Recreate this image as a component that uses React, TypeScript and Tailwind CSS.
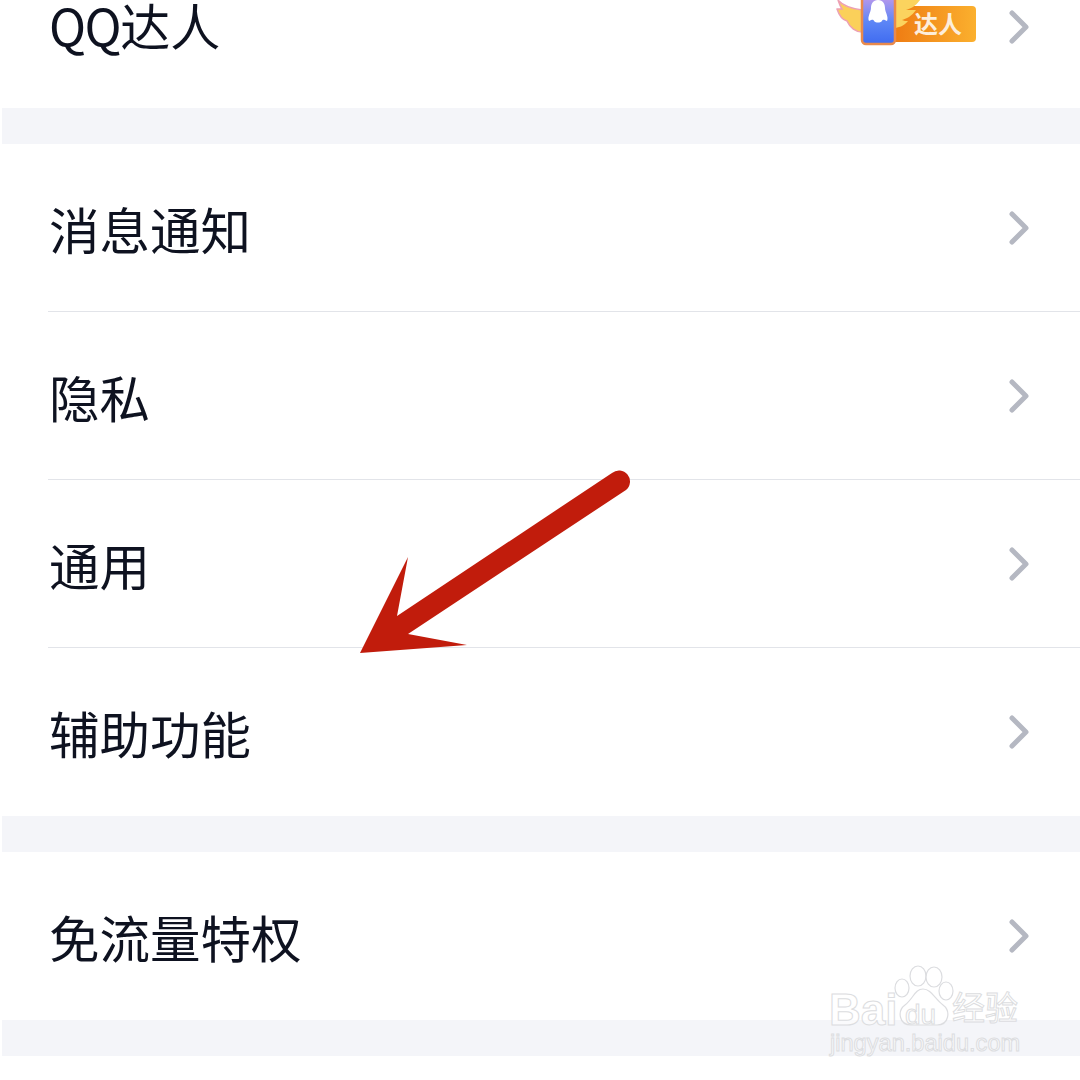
const rows = ['消息通知', '隐私', '通用', '辅助功能'];

function Chevron() {
  return (
    <svg width="24" height="36" viewBox="0 0 24 36" className="shrink-0">
      <path d="M5 4 L19 18 L5 32" fill="none" stroke="#b5b8c2" strokeWidth="5" strokeLinecap="round" strokeLinejoin="round" />
    </svg>
  );
}

function Row({ label, divider }: { label: string; divider?: boolean }) {
  return (
    <div className="h-[168px] pl-12 flex flex-col">
      <div className="flex-1 flex items-center justify-between pr-[49px]">
        <span className="text-[50.5px] leading-none pl-[1px] pt-[1px] text-[#0e1220]">{label}</span>
        <Chevron />
      </div>
      {divider && <div className="h-[1px] bg-[#e2e4e9]" />}
    </div>
  );
}

function Badge() {
  return (
    <svg width="140" height="54" viewBox="0 0 140 54" className="shrink-0">
      <defs>
        <linearGradient id="label" x1="0" x2="1" y1="0" y2="0">
          <stop offset="0" stopColor="#ee7a12" />
          <stop offset="1" stopColor="#fbb02e" />
        </linearGradient>
        <linearGradient id="phone" x1="0" x2="0" y1="0" y2="1">
          <stop offset="0" stopColor="#c79bea" />
          <stop offset="0.55" stopColor="#5d86f6" />
          <stop offset="1" stopColor="#3f6bf0" />
        </linearGradient>
      </defs>
      <rect x="55" y="6" width="85" height="36" rx="4" fill="url(#label)" />
      <path d="M2 0 C6 5 12 8 26 10 L26 32 C20 32 14 28 11 21 C7 20 3 15 1 9 C3 9 5 9 6 9 C4 6 3 3 2 0 Z" fill="#fbd05a" stroke="#eda0b4" strokeWidth="1.5" />
      <path d="M84 0 C80 6 74 9 70 10 C74 10 78 10 80 10 C76 16 70 19 66 20 C68 21 70 21 72 21 C68 26 62 28 58 28 L58 0 Z" fill="#fbd35e" />
      <rect x="26" y="-6" width="33" height="50" rx="4" fill="url(#phone)" stroke="#e98a4c" strokeWidth="2.5" />
      <path d="M42 0 C47 0 49 4 49 8 C49 12 53 17 51 21 C48 20 47 19 46 21 C44 23 40 23 38 21 C37 19 36 20 33 21 C31 17 35 12 35 8 C35 4 37 0 42 0 Z" fill="#ffffff" />
      <text x="102" y="33" textAnchor="middle" fontSize="24" fontWeight="700" fill="#fdeedb" fontFamily="'Noto Sans CJK SC', sans-serif">达人</text>
    </svg>
  );
}

function Arrow() {
  return (
    <svg width="1080" height="1080" viewBox="0 0 1080 1080" className="absolute inset-0 pointer-events-none">
      <path
        d="M360 653 L408 557 L397 616 L612 473 A11 11 0 0 1 626 490 L408 634 L467 645 Z"
        fill="#c11c0c"
      />
    </svg>
  );
}

function Watermark() {
  return (
    <div className="absolute left-[829px] top-[964px] w-[200px] h-[96px] pointer-events-none text-white/60 [-webkit-text-stroke:1px_#dcdde0] font-['Liberation_Sans',sans-serif]">
      <svg width="62" height="62" viewBox="0 0 62 62" className="absolute left-[64px] top-[1px]">
        <g fill="#ffffff" fillOpacity="0.6" stroke="#dcdde0" strokeWidth="1.2">
          <ellipse cx="9" cy="23" rx="7" ry="9" />
          <ellipse cx="25" cy="11" rx="8" ry="10" />
          <ellipse cx="41" cy="12" rx="8" ry="10" />
          <ellipse cx="53" cy="26" rx="7" ry="9" />
          <path d="M30 24 C22 24 20 34 12 40 C4 46 6 60 18 60 L44 60 C56 60 58 46 50 40 C42 34 38 24 30 24 Z" />
        </g>
      </svg>
      <span className="absolute left-0 top-[24px] text-[44px] leading-none font-bold">Bai</span>
      <span className="absolute left-[76px] top-[37px] text-[28px] leading-none">du</span>
      <span className="absolute left-[123px] top-[26px] text-[33px] leading-none font-['Noto_Sans_CJK_SC',sans-serif]">经验</span>
      <span className="absolute left-[1px] top-[68px] text-[23.6px] leading-none whitespace-nowrap">jingyan.baidu.com</span>
    </div>
  );
}

export default function App() {
  return (
    <div className="relative w-[1080px] h-[1080px] overflow-hidden bg-white font-['Noto_Sans_CJK_SC',sans-serif]">
      <div className="h-[108px] pl-12 pr-[49px] pb-[54px] flex items-center justify-between">
        <span className="text-[50px] leading-none pl-[1px] pb-[7px] text-[#0e1220]">
          <span className="tracking-[-1.5px]">QQ</span>达人
        </span>
        <div className="flex items-center gap-[31px]">
          <Badge />
          <Chevron />
        </div>
      </div>
      <div className="h-9 ml-[2px] bg-[#f4f5f9]" />
      {rows.map((r, i) => (
        <Row key={r} label={r} divider={i < rows.length - 1} />
      ))}
      <div className="h-9 ml-[2px] bg-[#f4f5f9]" />
      <Row label="免流量特权" />
      <div className="h-9 ml-[2px] bg-[#f4f5f9]" />
      <Arrow />
      <Watermark />
    </div>
  );
}
